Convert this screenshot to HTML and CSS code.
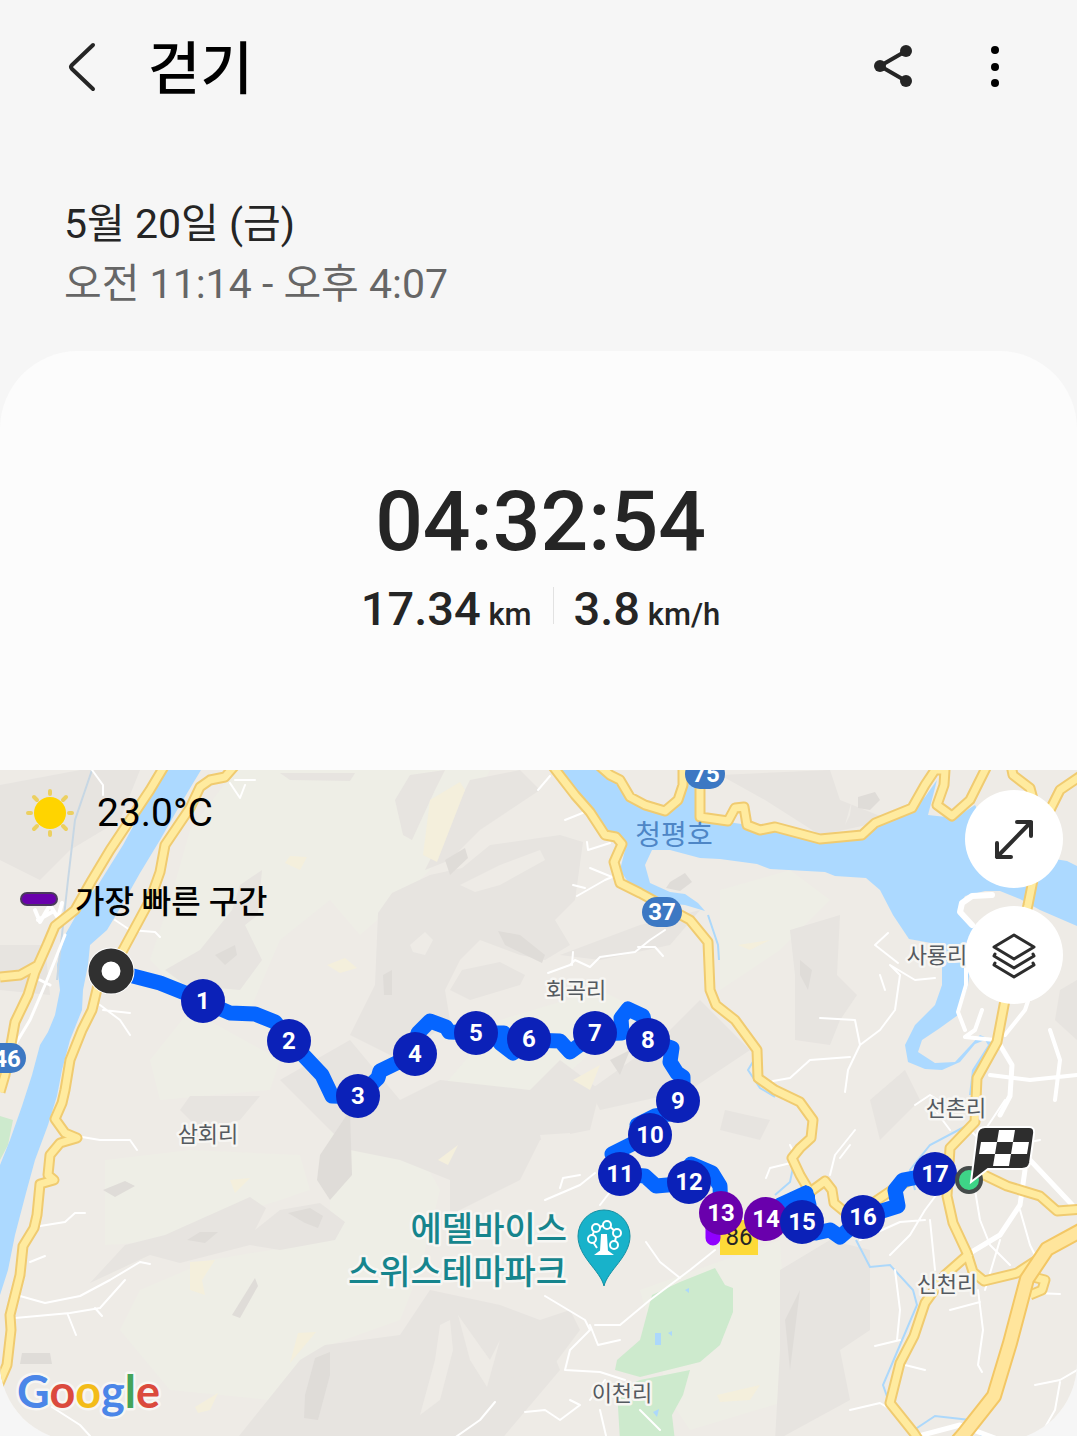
FILE: index.html
```html
<!DOCTYPE html>
<html lang="ko">
<head>
    <meta charset="UTF-8">
    <meta name="viewport" content="width=device-width, initial-scale=1.0">
    <title>걷기</title>
    <link rel="stylesheet" href="styles.css">
</head>
<body>
    <div class="screen">
        <header class="topbar">
            <button class="icon-button" aria-label="뒤로">
                <svg width="48" height="56" viewBox="0 0 48 56"><path d="M37 6 L16 26 Q14 28 16 30 L37 50" fill="none" stroke="#252525" stroke-width="4" stroke-linecap="round" stroke-linejoin="round"/></svg>
            </button>
            <h1>걷기</h1>
            <button class="icon-button" aria-label="공유">
                <svg width="48" height="56" viewBox="0 0 48 56"><path d="M37 12 L11 27 L37 42" fill="none" stroke="#252525" stroke-width="4"/><g fill="#252525"><circle cx="37" cy="12" r="6"/><circle cx="11" cy="27" r="6"/><circle cx="37" cy="42" r="6"/></g></svg>
            </button>
            <button class="icon-button" aria-label="더보기">
                <svg width="48" height="56" viewBox="0 0 48 56"><circle cx="25" cy="11" r="4"/><circle cx="25" cy="28" r="4"/><circle cx="25" cy="44" r="4"/></svg>
            </button>
        </header>

        <div class="period">
            <p>5월 20일 (금)</p>
            <p class="time">오전 11:14 - 오후 4:07</p>
        </div>

        <main class="card">
            <section class="summary">
                <div class="duration">04:32:54</div>
                <div class="metrics">
                    <div class="metric">17.34<span> km</span></div>
                    <div class="metric">3.8<span> km/h</span></div>
                </div>
            </section>

            <section class="map">
                <svg class="map-canvas" viewBox="0 770 1077 671">
                    <rect y="770" width="1077" height="671" fill="#eeebe6"/>

                    <!-- terrain -->
                    <g class="meadow">
                        <path d="M190 830L235 770H490L470 810L430 870L400 900L360 935L330 900L280 940L250 1010L190 1000L150 960L170 900Z"/>
                        <path d="M105 1160L190 1150L300 1155L310 1190L250 1210L190 1240L105 1245Z"/>
                        <path d="M330 1110L385 1090L440 1190L420 1270L400 1320L330 1345L270 1400L170 1390L120 1330L140 1290L210 1260L330 1240Z"/>
                        <path d="M640 1290L780 1240L790 1400L690 1430L670 1400Z"/>
                        <path d="M720 890L790 870L830 900L780 950L720 990Z"/>
                        <path d="M500 1020L600 990L640 1010L560 1080L500 1100L440 1090Z"/>
                        <path d="M190 1010L280 1060L270 1090L160 1100L150 1060Z"/>
                    </g>
                    <g class="hill">
                        <path d="M0 785L80 770H140L120 820L70 850L40 880L0 860Z"/>
                        <path d="M0 945L45 945L50 995L0 990Z"/>
                        <path d="M280 773H355L350 781L290 780Z"/>
                        <path d="M395 800L410 775L445 770L435 790L412 840L403 835Z"/>
                        <path d="M470 780L520 770L540 790L480 830L450 860L425 870L450 820Z"/>
                        <path d="M378 913L392 893L430 875L462 868L490 845L560 835L583 842L575 900L555 920L570 945L545 960L520 955L480 940L460 960L445 990L450 1020L400 1060L350 1035L375 985Z"/>
                        <path d="M245 925L258 915L262 870L240 885L232 910L200 950L165 970L185 985L240 990L262 960Z"/>
                        <path d="M560 955L640 925L700 910L670 945L600 960Z"/>
                        <path d="M462 970L500 962L525 975L520 985L470 1000L450 990Z"/>
                        <path d="M280 1080L350 1040L400 1100L440 1080L530 1090L560 1060L600 1090L590 1130L540 1140L520 1180L450 1215L450 1180L400 1160L350 1150L320 1120Z"/>
                        <path d="M90 1283L125 1245L165 1235L250 1197L266 1208L255 1230L280 1210L320 1203L345 1222L335 1240L280 1250L250 1245L180 1263L150 1255Z"/>
                        <path d="M235 1441L300 1360L325 1345L400 1335L430 1290L500 1305L540 1320L560 1370L500 1441Z"/>
                        <path d="M540 1320L570 1310L580 1330L550 1370L500 1380L510 1330Z"/>
                        <path d="M590 1090L660 1040L700 1000L750 1050L690 1090L600 1110Z"/>
                        <path d="M790 930L840 915L837 975L857 995L840 1020L830 1045L795 1040L795 975Z"/>
                        <path d="M720 775L830 770L840 800L890 820L820 835L765 800Z"/>
                        <path d="M780 1270L830 1240L870 1250L870 1330L840 1350L850 1400L775 1441L780 1350Z"/>
                        <path d="M725 1110L770 1120L760 1140L720 1130Z"/>
                        <path d="M870 1100L905 1070L920 1100L880 1140Z"/>
                        <path d="M1060 990L1077 980V1040L1055 1020Z"/>
                        <path d="M180 1110L190 1096H260L240 1120L200 1130Z"/>
                    </g>
                    <!-- valleys that cut into the hills -->
                    <g fill="#eeebe6">
                        <path d="M460 885L500 865L540 850L545 860L500 885L475 892Z"/>
                        <path d="M410 945L425 932L433 940L425 955L413 952Z"/>
                        <path d="M440 1325L450 1320L453 1350L440 1400L420 1415L435 1360Z"/>
                        <path d="M458 1315L490 1360L500 1340L487 1387L470 1360Z"/>
                        <path d="M540 1135L570 1133L568 1155L545 1155Z"/>
                        <path d="M850 815L852 800L845 825Z"/>
                    </g>
                    <g class="ridge">
                        <path d="M445 860L465 848L468 858L450 875Z"/>
                        <path d="M498 931L520 935L545 955L542 963L505 945Z"/>
                        <path d="M320 1155L350 1110L352 1175L330 1200L317 1180Z"/>
                        <path d="M800 960L812 970L808 990L800 975Z"/>
                        <path d="M858 797L875 792L880 800L870 810L858 808Z"/>
                        <path d="M187 1240L200 1232L218 1232L205 1243Z"/>
                        <path d="M103 1190L125 1181L135 1186L115 1197Z"/>
                        <path d="M288 1213L310 1208L323 1216L318 1228L305 1223Z"/>
                        <path d="M305 1395L315 1358L330 1352V1375L318 1420L304 1418Z"/>
                        <path d="M232 1315L255 1278L258 1286L240 1318Z"/>
                        <path d="M22 1353H50L52 1364H20Z"/>
                        <path d="M670 882L685 873L692 882L680 891L666 888Z"/>
                        <path d="M785 1320L800 1290L790 1370Z"/>
                        <path d="M215 955L235 945L237 955L225 965Z"/>
                        <path d="M610 1060L630 1050L620 1075Z"/>
                        <path d="M383 975L392 970V995H384Z"/>
                    </g>
                    <g class="sand">
                        <path d="M285 863L290 856L307 857L300 870Z"/>
                        <path d="M430 800L460 782L465 790L437 862L423 855Z"/>
                        <path d="M327 965L345 958L357 968L340 973Z"/>
                        <path d="M190 1262L215 1260L202 1280L205 1295L190 1290Z"/>
                        <path d="M573 1080L600 1065L590 1090Z"/>
                        <path d="M438 1160L458 1145L448 1165Z"/>
                        <path d="M230 1180L250 1178L235 1193Z"/>
                        <path d="M195 1407L218 1393L210 1410L198 1413Z"/>
                        <path d="M290 1363L298 1333L316 1332Z"/>
                        <path d="M717 1395L760 1385L750 1400L720 1402Z"/>
                        <path d="M738 945L770 940L750 950Z"/>
                    </g>

                    <!-- parks -->
                    <path class="park" d="M652 1295L680 1282L715 1268L725 1285L733 1288V1312L720 1345L700 1362L640 1377L615 1370L617 1360L640 1340Z"/>
                    <path class="park" d="M617 1390L640 1380L690 1370L683 1395L672 1415L675 1441H620Z"/>
                    <path class="park" d="M0 1116L13 1120L8 1145L0 1160Z"/>
                    <path d="M655 1333h6v12h-6zM668 1333l4-2v5zM653 1412l6-3-2 8zM685 1290l4-2v5z" fill="#acd8fb"/>

                    <!-- water -->
                    <path class="water" d="M165 770L150 795L123 845L98 885L82 905L65 935L57 965L60 990L55 1015L48 1032L40 1045L32 1075L22 1106L10 1140L0 1165V1295L8 1270L15 1235L26 1193L35 1160L48 1125L57 1096L62 1070L70 1040L82 1010L83 990L88 965L90 945L107 930L122 905L140 873L160 840L180 805L201 770Z"/>
                    <path class="water" d="M560 770L580 795L605 835L625 850L620 870L628 882L645 893L662 903L685 905L705 911L698 903L685 894L670 892L650 883L645 865L652 850L670 850L700 858L720 859L757 864L770 869L825 872L835 876L866 878L880 890L893 915L909 939L942 945V985L935 1005L915 1025L905 1045L908 1062L925 1069L942 1070L960 1062L975 1044L985 1040L988 1045L972 1070L969 1095L975 1095L992 1040L980 1035L968 1048L955 1062L935 1063L918 1052L922 1040L940 1028L958 1015L968 985L975 925L958 910L965 896L985 891L1000 891L1020 899L1040 910L1077 926V866L1067 861L1000 850L975 805L955 818L928 815L937 780L925 797L905 812L880 822L862 836L825 840L770 828L700 818V770H684L680 798L665 811L640 803L615 778L600 770Z"/>
                    <g fill="none" stroke="#acd8fb" stroke-width="2">
                        <path d="M92 770L75 820L68 880L57 980" stroke="#c7d7e4"/>
                        <path d="M708 915L718 945L719 960M757 1055L748 1070L760 1088L775 1097"/>
                        <path d="M966 1126L930 1145L910 1170L915 1190"/>
                        <path d="M856 1240L870 1267L890 1265L913 1290L917 1305L900 1345L883 1385L890 1405M914 1430L935 1416L970 1420L985 1440"/>
                        <path d="M795 1158L790 1182L775 1195"/>
                    </g>

                    <!-- small streets -->
                    <g class="street">
                        <path d="M548 973L570 965L575 960L590 967L600 957L635 952L650 940L665 930M638 947L655 947L663 956M573 952L572 965"/>
                        <path d="M538 790L550 776M565 820L585 812M587 842L588 850L610 843M577 896L605 880L612 877L590 868M573 885L585 888"/>
                        <path d="M92 770L103 785V795M230 783L240 798L245 785M235 780L255 780"/>
                        <path d="M35 910L40 922L50 905L58 918L62 903M38 920L52 912" stroke-width="4"/>
                        <path d="M65 935L45 985L30 1020L15 1045M40 980L50 985" stroke-width="3"/>
                        <path d="M115 920L130 930L155 932L160 937M100 1005L120 1020L130 1035M103 1010L130 1013"/>
                        <path d="M82 1137L100 1140L130 1140L137 1150M40 1226L65 1222L75 1213H85M30 1262L45 1256"/>
                        <path d="M20 1296L45 1303L80 1296L110 1280L140 1262L150 1264M15 1318L70 1313L100 1308L125 1280M68 1315L76 1335M95 1308L102 1316"/>
                        <path d="M52 1407L80 1425L90 1436M450 1441L480 1420L495 1402"/>
                        <path d="M545 1200L580 1185L595 1173M560 1188L563 1178L580 1175M600 1205L610 1192"/>
                        <path d="M545 1296L585 1320L590 1330L570 1350L565 1370L600 1372L625 1380M595 1325L620 1325L650 1300L690 1270L715 1250M590 1325L598 1345L620 1340M646 1242L660 1262L680 1278"/>
                        <path d="M525 1412L545 1410L560 1420L580 1405L570 1400M600 1410L607 1440M640 1410L660 1430M590 1400L605 1380"/>
                        <path d="M773 1081L790 1078L810 1060L850 1057M845 1092L848 1070L860 1045L880 1030L895 1010L900 975L890 965L915 980L935 978M898 963L875 945L888 933M860 1045L855 1020L820 1018M885 990L880 975"/>
                        <path d="M982 1010L975 1030L965 1037L995 1040M1005 1035L1025 1010L1030 995M990 1075L1030 1080L1077 1075M1055 1100L1060 1060L1050 1030M966 960V985L958 1012L965 1030" stroke-width="4"/>
                        <path d="M992 895L972 896L962 903L960 912L972 925" stroke-width="6"/>
                        <path d="M1000 1045L1012 1065L1010 1096L1000 1115" stroke-width="5"/>
                        <path d="M970 1253L1000 1235L1020 1205L1025 1170M1030 1160L1077 1210" stroke-width="5"/>
                        <path d="M766 1178L770 1168L795 1162M790 1145L795 1155M830 1175L835 1155L855 1130M840 1158L850 1145"/>
                        <path d="M880 1210L900 1205M890 1255L910 1235L925 1210L940 1190M930 1220L935 1270M895 1270L900 1310L897 1340M860 1240L900 1222L925 1220"/>
                        <path d="M955 1110L930 1095L915 1105M950 1130L935 1110M1020 1210L1030 1245L1035 1255M975 1190L980 1220L990 1245L1010 1265"/>
                        <path d="M978 1290L983 1330L978 1365L982 1372M950 1310L980 1302M1035 1293L1060 1294M850 1410L880 1403L900 1415M905 1365L925 1370M875 1346L900 1340M1035 1385L1060 1380L1077 1370M1060 1382L1055 1410L1040 1436"/>
                        <path d="M915 1437L960 1425L1000 1440" stroke-width="5"/>
                        <path d="M970 1130L990 1150L1040 1140M985 1130L1005 1100M1000 1240L985 1290"/>
                    </g>

                    <!-- highways: casing first, then fill -->
                    <defs>
                        <g id="roads">
                            <path d="M168 760L150 790L110 850L92 880L75 910L55 926L47 945L38 965L20 975L0 977M47 945L35 972L28 995L15 1022L10 1050L5 1075L0 1092"/>
                            <path d="M238 762L225 777L210 780L200 787L190 808L165 845L160 872L150 900L123 950L110 970L98 985L92 1010L82 1030L70 1060L65 1090L62 1103L55 1119L65 1133L77 1138L60 1143L50 1155L48 1175L54 1180L40 1184L37 1215L34 1228L23 1246L20 1275L10 1315L11 1330L7 1365L-3 1388"/>
                            <path d="M548 760L575 795L590 812L605 835L616 837L622 844L614 862L620 883L640 893L662 905L690 920L708 942L710 990L716 1005L735 1020L757 1050L758 1078L775 1090L800 1102L813 1120L811 1138L800 1148L792 1158L800 1175L810 1192L825 1181L832 1190L834 1203L845 1212L870 1205L895 1188L920 1175"/>
                            <path d="M595 762L610 775L620 780L630 797L645 805L665 811L678 800L683 785V760M700 770V817L728 821L735 808L744 807L747 825L760 830L775 827L820 839L862 835L875 823L912 808L925 785L935 770L945 770L944 785L937 805L952 816L970 800L990 760"/>
                            <path d="M1010 760L1013 775L1030 788L1036 810M1082 775L1060 790L1045 820L1035 870L1028 905L1005 1000L997 1042L977 1078L975 1122L950 1148L947 1196L953 1223L967 1253L973 1272L984 1281L1017 1273L1043 1256"/>
                            <path d="M970 1253L945 1275L925 1303L914 1336L900 1363L890 1403L914 1433L925 1450M980 1173L1007 1186L1040 1196L1057 1211L1082 1209M1025 1275L1045 1280L1042 1290L1030 1295"/>
                        </g>
                        <path id="expressway" d="M1082 1230L1047 1249L1027 1279L1010 1343L994 1396L964 1434L950 1450"/>
                    </defs>
                    <use href="#roads" class="road-casing"/>
                    <use href="#roads" class="road"/>
                    <use href="#expressway" class="expressway-casing"/>
                    <use href="#expressway" class="expressway"/>

                    <g class="shield">
                        <rect x="642" y="897" width="40" height="30" rx="15"/>
                        <rect x="685" y="759" width="40" height="30" rx="15"/>
                        <rect x="-14" y="1043" width="40" height="30" rx="15"/>
                        <text x="662" y="920">37</text>
                        <text x="706" y="782">75</text>
                        <text x="7" y="1067">46</text>
                    </g>
                    <rect x="720" y="1220" width="38" height="35" fill="#fdda38"/>
                    <text x="739" y="1245" class="local-road">86</text>

                    <g class="place">
                        <text x="576" y="998">회곡리</text>
                        <text x="208" y="1142">삼회리</text>
                        <text x="937" y="963">사룡리</text>
                        <text x="956" y="1116">선촌리</text>
                        <text x="947" y="1292">신천리</text>
                        <text x="622" y="1401">이천리</text>
                    </g>
                    <text x="674" y="845" class="lake">청평호</text>
                    <g class="attraction">
                        <text x="567" y="1241">에델바이스</text>
                        <text x="567" y="1284">스위스테마파크</text>
                    </g>
                    <path d="M604 1286C600 1270 578 1257 578 1236A26 26 0 0 1 630 1236C630 1257 608 1270 604 1286Z" fill="#18b2ca" stroke="#158fa2"/>
                    <g fill="none" stroke="#fff" stroke-width="2">
                        <path d="M597 1248L591 1239L595 1229L607 1224L617 1233L614 1245"/>
                        <g fill="#18b2ca">
                            <circle cx="592" cy="1239" r="4"/><circle cx="596" cy="1228" r="4"/><circle cx="607" cy="1225" r="4"/><circle cx="617" cy="1233" r="4"/><circle cx="614" cy="1245" r="4"/>
                        </g>
                        <path d="M602 1235H606L607 1251L611 1254H597L601 1251Z" fill="#fff"/>
                    </g>

                    <!-- walked route -->
                    <path class="route" d="M133 976L160 983L185 993L203 1001L230 1013L255 1014L275 1022L290 1041L322 1075L332 1096L358 1097L378 1078L380 1071L415 1054L418 1033L430 1021L446 1027L449 1032L476 1033L504 1033L500 1043L513 1053L530 1040L560 1041L570 1052L595 1034L622 1033L621 1018L628 1009L643 1016L648 1040L672 1048L670 1062L677 1073L683 1077V1112L655 1116L637 1125L650 1135L612 1154L620 1174L645 1176L656 1186L690 1183L691 1164L712 1173L720 1186L721 1213"/>
                    <path class="route" d="M766 1219L780 1205L806 1193L809 1205L802 1222L816 1233L830 1230L840 1237L863 1217L898 1206L895 1190L903 1180L935 1174"/>
                    <path d="M775 1203L806 1185L815 1195V1215H775Z" fill="#0565ff"/>
                    <path class="route fastest" d="M721 1213L713 1224V1238"/>

                    <g class="stop">
                        <g><circle cx="203" cy="1001" r="22"/><text x="203" y="1009">1</text></g>
                        <g><circle cx="289" cy="1041" r="22"/><text x="289" y="1049">2</text></g>
                        <g><circle cx="358" cy="1096" r="22"/><text x="358" y="1104">3</text></g>
                        <g><circle cx="415" cy="1054" r="22"/><text x="415" y="1062">4</text></g>
                        <g><circle cx="476" cy="1033" r="22"/><text x="476" y="1041">5</text></g>
                        <g><circle cx="529" cy="1039" r="22"/><text x="529" y="1047">6</text></g>
                        <g><circle cx="595" cy="1033" r="22"/><text x="595" y="1041">7</text></g>
                        <g><circle cx="648" cy="1040" r="22"/><text x="648" y="1048">8</text></g>
                        <g><circle cx="678" cy="1101" r="22"/><text x="678" y="1109">9</text></g>
                        <g><circle cx="650" cy="1135" r="22"/><text x="650" y="1143">10</text></g>
                        <g><circle cx="620" cy="1174" r="22"/><text x="620" y="1182">11</text></g>
                        <g><circle cx="689" cy="1182" r="22"/><text x="689" y="1190">12</text></g>
                        <g class="fast"><circle cx="721" cy="1213" r="22"/><text x="721" y="1221">13</text></g>
                        <g class="fast"><circle cx="766" cy="1219" r="22"/><text x="766" y="1227">14</text></g>
                        <g><circle cx="802" cy="1222" r="22"/><text x="802" y="1230">15</text></g>
                        <g><circle cx="863" cy="1217" r="22"/><text x="863" y="1225">16</text></g>
                        <g><circle cx="935" cy="1174" r="22"/><text x="935" y="1182">17</text></g>
                    </g>

                    <!-- start and finish -->
                    <circle cx="111" cy="971" r="16" fill="#fff" stroke="#fff" stroke-width="15"/>
                    <circle cx="111" cy="971" r="16" fill="#fff" stroke="#303030" stroke-width="13"/>
                    <circle cx="969" cy="1180" r="12" fill="#3ed487" stroke="#454b4a" stroke-width="4"/>
                    <path d="M971 1182L977 1134Q978 1127 985 1127H1029Q1035 1127 1034 1134L1030 1163Q1029 1169 1022 1169H988Z" fill="#2d2d2d" stroke="#fff" stroke-width="2"/>
                    <path d="M999 1130H1015L1013 1142H997ZM981 1142H997L995 1154H979ZM1013 1142H1029L1027 1154H1011ZM995 1154H1011L1009 1166H993Z" fill="#fff"/>

                    <text class="google" x="17" y="1408"><tspan fill="#4b86e8">G</tspan><tspan fill="#db4a3d">o</tspan><tspan fill="#f3bc19">o</tspan><tspan fill="#4b86e8">g</tspan><tspan fill="#43a45a">l</tspan><tspan fill="#db4a3d">e</tspan></text>
                </svg>

                <div class="map-info">
                    <div class="info-row weather">
                        <svg width="50" height="50" viewBox="0 0 50 50"><g stroke="#ecd061" stroke-width="4" stroke-linecap="round"><path d="M25 3V6M25 44V47M3 25H6M44 25H47M9 9L12 12M38 38L41 41M9 41L12 38M38 12L41 9"/></g><circle cx="25" cy="25" r="16" fill="#ffd400"/></svg>
                        <span>23.0°C</span>
                    </div>
                    <div class="info-row legend">
                        <i class="legend-bar"></i>
                        <span>가장 빠른 구간</span>
                    </div>
                </div>

                <div class="map-buttons">
                    <button class="round-button" aria-label="지도 확대">
                        <svg width="48" height="48" viewBox="0 0 48 48"><path d="M7 42L41 7M27 7H41V21M7 28V42H21" fill="none" stroke="#2d2d2d" stroke-width="4" stroke-linecap="round" stroke-linejoin="round"/></svg>
                    </button>
                    <button class="round-button" aria-label="지도 유형">
                        <svg width="48" height="48" viewBox="0 0 48 48"><g fill="none" stroke="#2d2d2d" stroke-width="3" stroke-linejoin="round" stroke-linecap="round"><path d="M24 4L44 16L24 28L4 16Z"/><path d="M5 23L4 25L24 37L44 25L43 23M5 32L4 34L24 46L44 34L43 32"/></g></svg>
                    </button>
                </div>
            </section>
        </main>
    </div>
</body>
</html>
```

FILE: styles.css
```css
* {
    box-sizing: border-box;
}

body {
    margin: 0;
    background-color: #f6f6f6;
    font-family: Roboto, "Noto Sans CJK KR", sans-serif;
    color: #252525;
}

button {
    padding: 0;
    border: none;
    background: none;
    cursor: pointer;
}

svg {
    display: block;
}

.screen {
    height: 100vh;
    overflow-y: auto;
    scrollbar-width: none;
}

.topbar {
    display: flex;
    align-items: center;
    height: 134px;
    padding: 0 59px 0 56px;
}

.topbar h1 {
    flex: 1;
    margin: 0 0 0 44px;
    padding-top: 6px;
    font-size: 57px;
    font-weight: 500;
    line-height: 80px;
    color: #000;
}

.icon-button + .icon-button {
    margin-left: 53px;
}

.period {
    padding: 60px 64px 37px;
    font-size: 41px;
    line-height: 60px;
}

.period p {
    margin: 0;
}

.period .time {
    color: #666;
}

.card {
    overflow: hidden;
    border-radius: 78px;
    background-color: #fcfcfc;
}

.summary {
    padding: 123px 20px 131px 24px;
    text-align: center;
    font-weight: 500;
}

.duration {
    font-size: 84px;
    line-height: 96px;
}

.metrics {
    display: flex;
    justify-content: center;
    height: 60px;
    margin-top: 9px;
    line-height: 60px;
}

.metric {
    position: relative;
    padding: 0 21px;
    font-size: 47px;
}

.metric span {
    font-size: 31px;
    line-height: 1;
}

.metric + .metric::before {
    content: "";
    position: absolute;
    left: 0;
    top: 8px;
    width: 1px;
    height: 37px;
    background-color: #e2e2e2;
}

.map {
    position: relative;
}

.map-canvas {
    width: 100%;
    height: auto;
}

.meadow { fill: #eeeee6; }
.hill { fill: #e7e4e0; }
.ridge { fill: #dfdcd8; }
.sand { fill: #f4efdc; }
.park { fill: #cdeacd; }
.water { fill: #acd9ff; }

.street {
    fill: none;
    stroke: #fff;
    stroke-width: 2;
    stroke-linejoin: round;
    stroke-linecap: round;
}

.road-casing,
.road,
.expressway-casing,
.expressway {
    fill: none;
    stroke-linejoin: round;
}

.road-casing {
    stroke: #f0cb70;
    stroke-width: 11;
}

.road {
    stroke: #ffeb9f;
    stroke-width: 7;
}

.expressway-casing {
    stroke: #f3c765;
    stroke-width: 16;
}

.expressway {
    stroke: #ffe59c;
    stroke-width: 12;
}

.shield {
    fill: #3c78c3;
    font-size: 24px;
    font-weight: 700;
    text-anchor: middle;
}

.shield text {
    fill: #fff;
}

.local-road {
    font-size: 24px;
    text-anchor: middle;
    fill: #252525;
}

.place,
.lake,
.attraction,
.google {
    paint-order: stroke;
    stroke: #f7f6f3;
    stroke-width: 5px;
    stroke-linejoin: round;
}

.place {
    font-size: 22px;
    text-anchor: middle;
    fill: #555a60;
}

.lake {
    font-size: 28px;
    text-anchor: middle;
    fill: #4e86c6;
    stroke: none;
}

.attraction {
    font-size: 34px;
    font-weight: 500;
    text-anchor: end;
    fill: #16858d;
}

.google {
    font-family: Lato, sans-serif;
    font-size: 45px;
    font-weight: 700;
}

.route {
    fill: none;
    stroke: #0565ff;
    stroke-width: 15;
    stroke-linejoin: round;
    stroke-linecap: round;
}

.route.fastest {
    stroke: #9000ff;
}

.stop {
    font-size: 24px;
    font-weight: 700;
    text-anchor: middle;
}

.stop circle { fill: #0b21b8; }
.stop .fast circle { fill: #6900ac; }
.stop text { fill: #fff; }

.map-info {
    position: absolute;
    top: 18px;
    left: 20px;
    color: #000;
}

.info-row {
    display: flex;
    align-items: center;
    height: 50px;
}

.weather {
    gap: 22px;
    padding-left: 5px;
    font-size: 39px;
}

.legend {
    gap: 17px;
    margin-top: 36px;
    font-size: 32px;
    font-weight: 500;
}

.legend-bar {
    width: 38px;
    height: 14px;
    border: 2px solid #4a3a5c;
    border-radius: 7px;
    background-color: #6900ac;
}

.map-buttons {
    position: absolute;
    top: 20px;
    right: 14px;
    display: flex;
    flex-direction: column;
    gap: 18px;
}

.round-button {
    display: flex;
    align-items: center;
    justify-content: center;
    width: 98px;
    height: 98px;
    border-radius: 50%;
    background-color: #fff;
}
```
